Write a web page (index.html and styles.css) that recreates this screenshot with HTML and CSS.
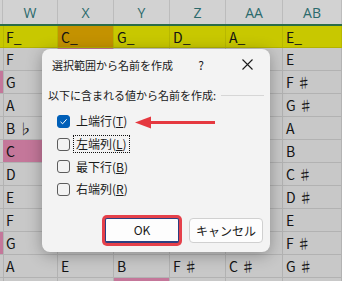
FILE: index.html
```html
<!DOCTYPE html>
<html lang="ja">
<head>
  <meta charset="UTF-8" />
  <title>選択範囲から名前を作成</title>
  <link rel="stylesheet" href="styles.css">
</head>
<body>
  <div class="sheet">
    <div class="row head">
      <div class="cell"></div>
      <div class="cell">W</div>
      <div class="cell">X</div>
      <div class="cell">Y</div>
      <div class="cell">Z</div>
      <div class="cell">AA</div>
      <div class="cell">AB</div>
    </div>
    <div class="green-line"></div>
    <div class="row first">
      <div class="cell"></div>
      <div class="cell">F_</div>
      <div class="cell orange">C_</div>
      <div class="cell">G_</div>
      <div class="cell">D_</div>
      <div class="cell">A_</div>
      <div class="cell">E_</div>
    </div>
    <div class="row">
      <div class="cell"></div><div class="cell">F</div><div class="cell pink"></div><div class="cell"></div><div class="cell"></div><div class="cell"></div><div class="cell">E</div>
    </div>
    <div class="row">
      <div class="cell pink"></div><div class="cell">G</div><div class="cell"></div><div class="cell"></div><div class="cell"></div><div class="cell"></div><div class="cell">F ♯</div>
    </div>
    <div class="row">
      <div class="cell"></div><div class="cell">A</div><div class="cell"></div><div class="cell"></div><div class="cell"></div><div class="cell"></div><div class="cell">G ♯</div>
    </div>
    <div class="row">
      <div class="cell"></div><div class="cell">B ♭</div><div class="cell"></div><div class="cell"></div><div class="cell"></div><div class="cell"></div><div class="cell">A</div>
    </div>
    <div class="row">
      <div class="cell"></div><div class="cell pink">C</div><div class="cell"></div><div class="cell"></div><div class="cell"></div><div class="cell"></div><div class="cell">B</div>
    </div>
    <div class="row">
      <div class="cell"></div><div class="cell">D</div><div class="cell"></div><div class="cell"></div><div class="cell"></div><div class="cell"></div><div class="cell">C ♯</div>
    </div>
    <div class="row">
      <div class="cell"></div><div class="cell">E</div><div class="cell"></div><div class="cell"></div><div class="cell"></div><div class="cell"></div><div class="cell">D ♯</div>
    </div>
    <div class="row">
      <div class="cell"></div><div class="cell">F</div><div class="cell"></div><div class="cell"></div><div class="cell"></div><div class="cell"></div><div class="cell">E</div>
    </div>
    <div class="row">
      <div class="cell pink"></div><div class="cell">G</div><div class="cell"></div><div class="cell"></div><div class="cell"></div><div class="cell"></div><div class="cell">F ♯</div>
    </div>
    <div class="row">
      <div class="cell"></div><div class="cell">A</div><div class="cell">E</div><div class="cell">B</div><div class="cell">F ♯</div><div class="cell">C ♯</div><div class="cell">G ♯</div>
    </div>
    <div class="row">
      <div class="cell"></div><div class="cell"></div><div class="cell"></div><div class="cell pink"></div><div class="cell"></div><div class="cell"></div><div class="cell"></div>
    </div>
  </div>

  <div class="dialog">
    <div class="titlebar">
      <span class="title">選択範囲から名前を作成</span>
      <span class="help">?</span>
      <span class="close">
        <svg width="11" height="11" viewBox="0 0 11 11"><path d="M0.5 0.5 L10.5 10.5 M10.5 0.5 L0.5 10.5" stroke="#1a1a1a" stroke-width="1.1" fill="none"/></svg>
      </span>
    </div>
    <div class="body">
      <div class="group">
        <span>以下に含まれる値から名前を作成:</span>
        <span class="sep"></span>
      </div>
      <div class="checks">
        <div class="check">
          <span class="box checked">
            <svg width="9" height="9" viewBox="0 0 9 9"><path d="M1.5 4.8 L3.6 6.8 L7.6 2.3" stroke="#fff" stroke-width="1" fill="none"/></svg>
          </span>
          <span class="label">上端行(<u>T</u>)</span>
        </div>
        <div class="check">
          <span class="box"></span>
          <span class="label focus">左端列(<u>L</u>)</span>
        </div>
        <div class="check">
          <span class="box"></span>
          <span class="label">最下行(<u>B</u>)</span>
        </div>
        <div class="check">
          <span class="box"></span>
          <span class="label">右端列(<u>R</u>)</span>
        </div>
      </div>
      <div class="buttons">
        <button class="btn ok">OK</button>
        <button class="btn">キャンセル</button>
      </div>
    </div>
    <svg class="arrow" width="80" height="13" viewBox="0 0 80 13">
      <path d="M14 6.5 L80 6.5" stroke="#e5383f" stroke-width="3"/>
      <polygon points="0,6.5 16,0.5 16,12.5" fill="#e5383f"/>
    </svg>
  </div>
</body>
</html>
```

FILE: styles.css
```css
html, body {
  overflow: hidden;
}
body {
  margin: 0;
  width: 342px;
  height: 281px;
  background: #c6c6c6;
  font-family: 'Noto Sans CJK JP', sans-serif;
  position: relative;
}
.sheet {
  width: 342px;
  height: 281px;
  overflow: hidden;
}
.row {
  display: grid;
  grid-template-columns: 3px 55px 56px 56px 56px 57px 59px;
  height: 23px;
  background: #c8c8c8;
}
.cell {
  box-sizing: border-box;
  border-right: 1px solid #b2b2b2;
  border-bottom: 1px solid #b2b2b2;
  padding-left: 3px;
  font-size: 14px;
  line-height: 22px;
  color: #141414;
  white-space: nowrap;
  overflow: hidden;
}
.head {
  height: 24px;
  background: #d2d2d2;
}
.head .cell {
  border-bottom: none;
  border-right-color: #bcbcbc;
  text-align: center;
  padding-left: 0;
  line-height: 26px;
  color: #2b6a6c;
  font-family: 'Open Sans', sans-serif;
  font-size: 14px;
}
.green-line {
  height: 2px;
  background: #2a6c48;
}
.first {
  height: 22px;
  background: #c8c800;
}
.first .cell {
  line-height: 22px;
  border-bottom-color: #b3b300;
  border-right-color: #b8b800;
}
.orange {
  background: #c49200;
}
.pink {
  background: #c4779a;
}
.dialog {
  position: absolute;
  left: 42px;
  top: 49px;
  width: 228px;
  height: 203px;
  background: #f3f3f3;
  border-radius: 8px;
  box-shadow: 0 3px 16px rgba(0,0,0,0.3);
  color: #1a1a1a;
}
.titlebar {
  height: 31px;
  display: flex;
  align-items: center;
  padding-left: 10px;
  font-size: 11px;
}
.title {
  flex: 1;
}
.help {
  width: 14px;
  margin-right: 16px;
  text-align: center;
  font-size: 12px;
}
.close {
  width: 46px;
  display: flex;
  justify-content: center;
}
.body {
  padding: 0 6px;
}
.group {
  margin-top: 6px;
  height: 18px;
  display: flex;
  align-items: center;
  gap: 5px;
  font-size: 11px;
}
.sep {
  flex: 1;
  height: 1px;
  background: #d6d6d6;
}
.checks {
  margin-top: 6px;
}
.check {
  height: 22.7px;
  display: flex;
  align-items: center;
  padding-left: 9px;
  font-size: 12px;
}
.box {
  box-sizing: border-box;
  width: 13px;
  height: 13px;
  border: 1px solid #5c5c5c;
  border-radius: 3px;
  margin-right: 3px;
  display: flex;
  align-items: center;
  justify-content: center;
}
.box.checked {
  background: #005fb8;
  border-color: #005fb8;
}
.label {
  padding: 0 2px;
  line-height: 16px;
  border: 1px solid transparent;
}
.label.focus {
  border: 1px dotted #111;
}
.buttons {
  display: flex;
  justify-content: flex-end;
  gap: 10px;
  margin-top: 17px;
  padding-right: 1px;
}
.btn {
  width: 74px;
  height: 25px;
  background: #fdfdfd;
  border: 1px solid #d0d0d0;
  border-radius: 4px;
  font-family: 'Noto Sans CJK JP', sans-serif;
  font-size: 12px;
  color: #1a1a1a;
  padding: 0;
}
.btn.ok {
  border: 1px solid #2b3f80;
  border-bottom-width: 2px;
  box-shadow: 0 0 0 3px #e5404a;
  border-radius: 2px;
}
.arrow {
  position: absolute;
  left: 93px;
  top: 67px;
}
```
